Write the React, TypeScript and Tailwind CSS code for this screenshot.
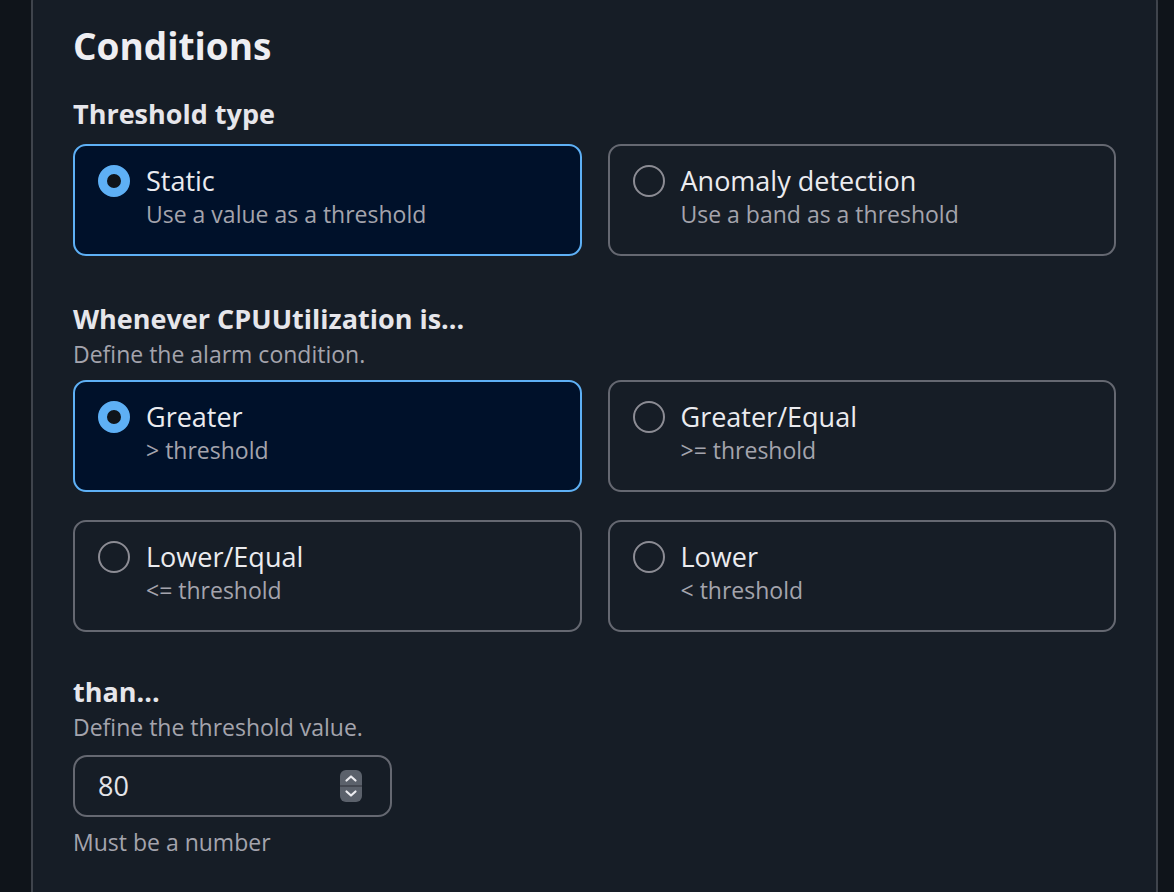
import React from "react";

type Option = { label: string; desc: string };

const THRESHOLD_TYPES: Option[] = [
  { label: "Static", desc: "Use a value as a threshold" },
  { label: "Anomaly detection", desc: "Use a band as a threshold" },
];

const CONDITIONS: Option[] = [
  { label: "Greater", desc: "> threshold" },
  { label: "Greater/Equal", desc: ">= threshold" },
  { label: "Lower/Equal", desc: "<= threshold" },
  { label: "Lower", desc: "< threshold" },
];

function Radio({ checked }: { checked: boolean }) {
  return checked ? (
    <span className="mt-[1px] block h-[32px] w-[32px] shrink-0 rounded-full border-[9px] border-[#5eb0f5] bg-[#0f141a]" />
  ) : (
    <span className="mt-[1px] block h-[32px] w-[32px] shrink-0 rounded-full border-2 border-[#8c8c94]" />
  );
}

function Tile({ option, checked }: { option: Option; checked: boolean }) {
  return (
    <div
      className={`flex h-[112px] items-start gap-[16px] rounded-[13px] border-2 pl-[23px] pt-[18px] ${
        checked ? "border-[#5eb0f5] bg-[#00112a]" : "border-[#656871] bg-[#161d26]"
      }`}
    >
      <Radio checked={checked} />
      <div>
        <p className="text-[27px] leading-[34px] text-[#ebebef]">{option.label}</p>
        <p className="text-[23px] leading-[32px] text-[#a4a4ad]">{option.desc}</p>
      </div>
    </div>
  );
}

function Field({
  label,
  desc,
  gap = 9,
  children,
}: {
  label: string;
  desc?: string;
  gap?: number;
  children: React.ReactNode;
}) {
  return (
    <div>
      <p className="text-[27px] font-bold leading-[36px] text-[#e6e6eb]">{label}</p>
      {desc && <p className="text-[23px] leading-[34px] text-[#a4a4ad]">{desc}</p>}
      <div className={gap === 12 ? "mt-[12px]" : gap === 11 ? "mt-[11px]" : "mt-[9px]"}>{children}</div>
    </div>
  );
}

function Spinner() {
  return (
    <svg width="22" height="32" viewBox="0 0 22 32">
      <rect x="0" y="0" width="22" height="32" rx="6" fill="#5b616b" />
      <line x1="0" y1="16" x2="22" y2="16" stroke="#3c4048" strokeWidth="1.5" />
      <path d="M6.5 10.5 L11 6.5 L15.5 10.5" fill="none" stroke="#ececf0" strokeWidth="2.2" strokeLinecap="round" strokeLinejoin="round" />
      <path d="M6.5 21.5 L11 25.5 L15.5 21.5" fill="none" stroke="#ececf0" strokeWidth="2.2" strokeLinecap="round" strokeLinejoin="round" />
    </svg>
  );
}

export default function App() {
  return (
    <div
      className="h-[892px] overflow-hidden bg-[#0f141a] pl-[31px] pr-[16px]"
      style={{ fontFamily: '"Open Sans", "Noto Sans", sans-serif' }}
    >
      <section className="-mt-4 h-[1000px] rounded-[18px] border-2 border-[#3f444c] bg-[#161d26] px-10 pt-[37px]">
        <h2 className="text-[37px] font-bold leading-[46px] text-[#eeeef2]">Conditions</h2>

        <div className="mt-[27px]">
          <Field label="Threshold type" gap={12}>
            <div className="grid grid-cols-2 gap-x-[26px]">
              {THRESHOLD_TYPES.map((o, i) => (
                <Tile key={o.label} option={o} checked={i === 0} />
              ))}
            </div>
          </Field>
        </div>

        <div className="mt-[45px]">
          <Field label="Whenever CPUUtilization is..." desc="Define the alarm condition.">
            <div className="grid grid-cols-2 gap-x-[26px] gap-y-[28px]">
              {CONDITIONS.map((o, i) => (
                <Tile key={o.label} option={o} checked={i === 0} />
              ))}
            </div>
          </Field>
        </div>

        <div className="mt-[42px]">
          <Field label="than..." desc="Define the threshold value." gap={11}>
            <div className="flex h-[62px] w-[319px] items-center justify-between rounded-[14px] border-2 border-[#656871] pl-[23px] pr-[28px]">
              <span className="text-[27px] text-[#e4e4e9]">80</span>
              <Spinner />
            </div>
            <p className="mt-[8px] text-[23px] leading-[34px] text-[#a4a4ad]">Must be a number</p>
          </Field>
        </div>
      </section>
    </div>
  );
}
